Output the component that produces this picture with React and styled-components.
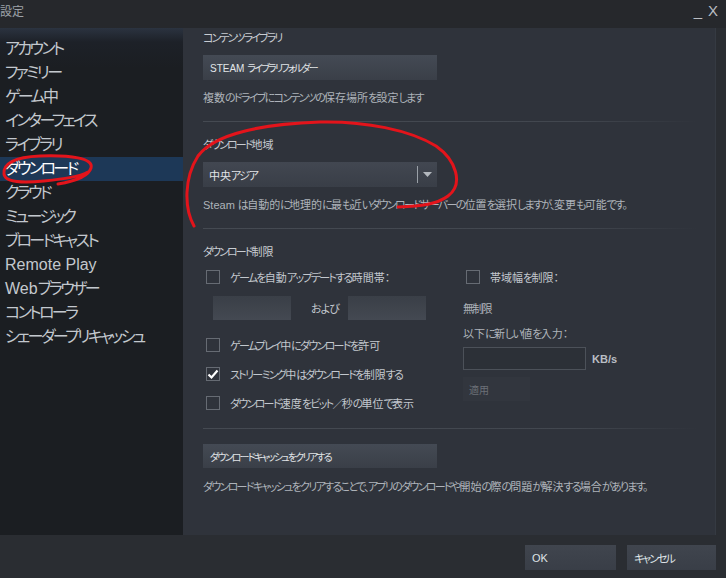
import React from 'react';
import styled, { createGlobalStyle } from 'styled-components';

const GlobalStyle = createGlobalStyle`
  html, body {
    margin: 0;
    padding: 0;
    background: #2a2d32;
  }
  body {
    font-family: "Liberation Sans", "Noto Sans CJK JP", sans-serif;
    font-feature-settings: "palt";
  }
  * {
    box-sizing: border-box;
  }
`;

// kana runs take the parent's tracking; kanji and latin runs reset it
const Kanji = styled.span`
  letter-spacing: var(--kanji, 0);
`;

const Latin = styled.span`
  letter-spacing: 0;
`;

function Jp({ text }) {
  const parts = text.split(/([\u3005\u4e00-\u9fff]+|[A-Za-z0-9/ ]+)/).filter(Boolean);
  return (
    <span>
      {parts.map((part, i) => {
        if (/^[\u3005\u4e00-\u9fff]/.test(part)) return <Kanji key={i}>{part}</Kanji>;
        if (/^[A-Za-z0-9/ ]/.test(part)) return <Latin key={i}>{part}</Latin>;
        return <React.Fragment key={i}>{part}</React.Fragment>;
      })}
    </span>
  );
}

const Window = styled.div`
  position: relative;
  width: 726px;
  height: 578px;
  display: flex;
  flex-direction: column;
  background: #2a2d32;
  overflow: hidden;
`;

const TitleBar = styled.div`
  height: 28px;
  display: flex;
  justify-content: space-between;
  background: #26282c;
`;

const Title = styled.div`
  font-size: 12px;
  line-height: 12px;
  color: #9da2a8;
  padding-top: 6px;
`;

const WindowControls = styled.div`
  display: flex;
  gap: 6px;
  padding: 3px 8px 0 0;
  color: #b9bdc2;
  font-size: 15px;
  line-height: 15px;
`;

const Body = styled.div`
  flex: 1;
  display: flex;
  min-height: 0;
`;

const Sidebar = styled.nav`
  width: 183px;
  padding-top: 9px;
  background: linear-gradient(to bottom, #2b3340 0, #1d2128 14px, #1b1e22 40px);
`;

const NavItem = styled.div`
  height: 24px;
  line-height: 24px;
  padding-left: 5px;
  font-size: 16px;
  letter-spacing: -2.6px;
  --kanji: -0.5px;
  color: ${p => (p.$active ? '#ffffff' : '#c3c8ce')};
  background: ${p => (p.$active ? '#1d3857' : 'transparent')};
  white-space: nowrap;
`;

const Content = styled.main`
  width: 533px;
  padding: 3px 0 0 20px;
  background: #2f333b;
  border-right: 1px solid #353a42;
  display: flex;
  flex-direction: column;
`;

const SectionTitle = styled.div`
  font-size: 11px;
  line-height: 14px;
  letter-spacing: -1.9px;
  color: #c8ccd2;
  margin-top: ${p => p.$gap || 0}px;
`;

const Description = styled.div`
  font-size: 11px;
  line-height: 14px;
  letter-spacing: -1.7px;
  color: #aeb3ba;
  margin-top: ${p => p.$gap || 0}px;
  white-space: nowrap;
`;

const Divider = styled.div`
  height: 1px;
  width: 495px;
  margin-top: ${p => p.$gap || 0}px;
  background: linear-gradient(to right, #454a52 0%, #42474f 75%, rgba(66, 71, 79, 0) 100%);
`;

const WideButton = styled.div`
  width: 234px;
  height: ${p => p.$h || 25}px;
  margin-top: ${p => p.$gap || 0}px;
  padding-left: 7px;
  display: flex;
  align-items: center;
  font-size: 10px;
  letter-spacing: -1.8px;
  color: #e2e5e8;
  background: linear-gradient(to bottom, #444a54, #3a3f48);
`;

const Dropdown = styled.div`
  width: 234px;
  height: 25px;
  margin-top: 10px;
  display: flex;
  align-items: center;
  background: linear-gradient(to bottom, #424751, #393e47);
`;

const DropdownValue = styled.div`
  flex: 1;
  padding-left: 6px;
  font-size: 11px;
  letter-spacing: -1.5px;
  color: #e2e5e8;
`;

const DropdownArrow = styled.div`
  width: 20px;
  height: 17px;
  border-left: 1px solid #9aa0a7;
  display: flex;
  align-items: center;
  justify-content: center;
`;

const LimitsGrid = styled.div`
  display: grid;
  grid-template-columns: 260px 1fr;
  margin-top: 8px;
`;

const Column = styled.div`
  display: flex;
  flex-direction: column;
`;

const CheckRow = styled.div`
  height: 20px;
  display: flex;
  align-items: center;
  padding-left: 3px;
  margin-top: ${p => p.$gap || 0}px;
  font-size: 11px;
  letter-spacing: -1.7px;
  color: #c3c8ce;
  white-space: nowrap;
`;

const Box = styled.span`
  width: 14px;
  height: 14px;
  margin-right: 10px;
  flex-shrink: 0;
  border: 1px solid #666b73;
  display: flex;
  align-items: center;
  justify-content: center;
`;

const TimeRow = styled.div`
  display: flex;
  align-items: center;
  margin-top: 9px;
  padding-left: 10px;
  font-size: 11px;
  letter-spacing: -1px;
  color: #c3c8ce;
`;

const TimeInput = styled.div`
  width: 78px;
  height: 24px;
  background: linear-gradient(to bottom, #3a3f47, #444952);
`;

const TimeJoin = styled.span`
  width: 57px;
  padding-left: 20px;
`;

const RateRow = styled.div`
  display: flex;
  align-items: center;
  gap: 6px;
  margin-top: 6px;
  font-size: 11px;
  font-weight: bold;
  color: #b9bec4;
`;

const RateInput = styled.div`
  width: 123px;
  height: 23px;
  border: 1px solid #4c5159;
  background: #2c3037;
`;

const ApplyButton = styled.div`
  width: 67px;
  height: 24px;
  margin-top: 7px;
  padding-left: 6px;
  display: flex;
  align-items: center;
  font-size: 10px;
  color: #6c7077;
  background: #32363e;
`;

const Strip = styled.div`
  flex: 1;
  background: #2a2d32;
`;

const Footer = styled.footer`
  height: 43px;
  display: flex;
  justify-content: flex-end;
  gap: 11px;
  padding: 10px 10px 0 0;
  background: #2a2d32;
`;

const FooterButton = styled.div`
  width: ${p => p.$w}px;
  height: 25px;
  padding-left: 7px;
  display: flex;
  align-items: center;
  font-size: 11px;
  letter-spacing: -2px;
  color: #dfe3e7;
  background: linear-gradient(to bottom, #40454e, #393e47);
`;

const Ink = styled.svg`
  position: absolute;
  inset: 0;
  pointer-events: none;
`;

const navItems = [
  'アカウント',
  'ファミリー',
  'ゲーム中',
  'インターフェイス',
  'ライブラリ',
  'ダウンロード',
  'クラウド',
  'ミュージック',
  'ブロードキャスト',
  'Remote Play',
  'Webブラウザー',
  'コントローラ',
  'シェーダープリキャッシュ',
];

function Checkbox({ checked, label, gap }) {
  return (
    <CheckRow $gap={gap}>
      <Box>
        {checked && (
          <svg width="12" height="12" viewBox="0 0 12 12">
            <polyline points="1.5,6.5 4.5,9.5 10.5,2.5" fill="none" stroke="#ffffff" strokeWidth="2.2" />
          </svg>
        )}
      </Box>
      <Jp text={label} />
    </CheckRow>
  );
}

export default function App() {
  return (
    <Window>
      <GlobalStyle />
      <TitleBar>
        <Title>設定</Title>
        <WindowControls>
          <span>_</span>
          <span>X</span>
        </WindowControls>
      </TitleBar>
      <Body>
        <Sidebar>
          {navItems.map(item => (
            <NavItem key={item} $active={item === 'ダウンロード'}>
              <Jp text={item} />
            </NavItem>
          ))}
        </Sidebar>
        <Content>
          <SectionTitle><Jp text="コンテンツライブラリ" /></SectionTitle>
          <WideButton $gap={10}><Jp text="STEAM ライブラリフォルダー" /></WideButton>
          <Description $gap={11}><Jp text="複数のドライブにコンテンツの保存場所を設定します" /></Description>
          <Divider $gap={16} />

          <SectionTitle $gap={16}><Jp text="ダウンロード地域" /></SectionTitle>
          <Dropdown>
            <DropdownValue><Jp text="中央アジア" /></DropdownValue>
            <DropdownArrow>
              <svg width="9" height="5" viewBox="0 0 9 5">
                <polygon points="0,0 9,0 4.5,5" fill="#b3b8be" />
              </svg>
            </DropdownArrow>
          </Dropdown>
          <Description $gap={11}>
            <Jp text="Steam は自動的に地理的に最も近いダウンロードサーバーの位置を選択しますが、変更も可能です。" />
          </Description>
          <Divider $gap={16} />

          <SectionTitle $gap={16}><Jp text="ダウンロード制限" /></SectionTitle>
          <LimitsGrid>
            <Column>
              <Checkbox label="ゲームを自動アップデートする時間帯：" />
              <TimeRow>
                <TimeInput />
                <TimeJoin>および</TimeJoin>
                <TimeInput />
              </TimeRow>
              <Checkbox gap={15} label="ゲームプレイ中にダウンロードを許可" />
              <Checkbox gap={9} checked label="ストリーミング中はダウンロードを制限する" />
              <Checkbox gap={9} label="ダウンロード速度をビット／秒の単位で表示" />
            </Column>
            <Column>
              <Checkbox label="帯域幅を制限：" />
              <Description $gap={15}>無制限</Description>
              <Description $gap={11}><Jp text="以下に新しい値を入力：" /></Description>
              <RateRow>
                <RateInput />
                KB/s
              </RateRow>
              <ApplyButton>適用</ApplyButton>
            </Column>
          </LimitsGrid>
          <Divider $gap={15} />

          <WideButton $gap={15} $h={24}><Jp text="ダウンロードキャッシュをクリアする" /></WideButton>
          <Description $gap={12}>
            <Jp text="ダウンロードキャッシュをクリアすることで、アプリのダウンロードや開始の際の問題が解決する場合があります。" />
          </Description>
        </Content>
        <Strip />
      </Body>
      <Footer>
        <FooterButton $w={91}><Jp text="OK" /></FooterButton>
        <FooterButton $w={89}><Jp text="キャンセル" /></FooterButton>
      </Footer>

      <Ink width="726" height="578" viewBox="0 0 726 578">
        <g fill="none" stroke="#e3141b" strokeWidth="3" strokeLinecap="round" strokeLinejoin="round">
          <path d="M 58 184 C 70 182, 88 178, 91 168 C 94 158, 70 155, 40 156 C 14 157, 3 164, 4 174 C 5 183, 24 183, 44 181 C 62 179, 80 177, 88 172" />
          <path d="M 194 226 C 184 208, 184 178, 198 156 C 214 134, 262 124, 320 122 C 365 121, 410 130, 436 146 C 456 160, 464 184, 448 196 C 436 205, 420 206, 398 207" />
        </g>
      </Ink>
    </Window>
  );
}
